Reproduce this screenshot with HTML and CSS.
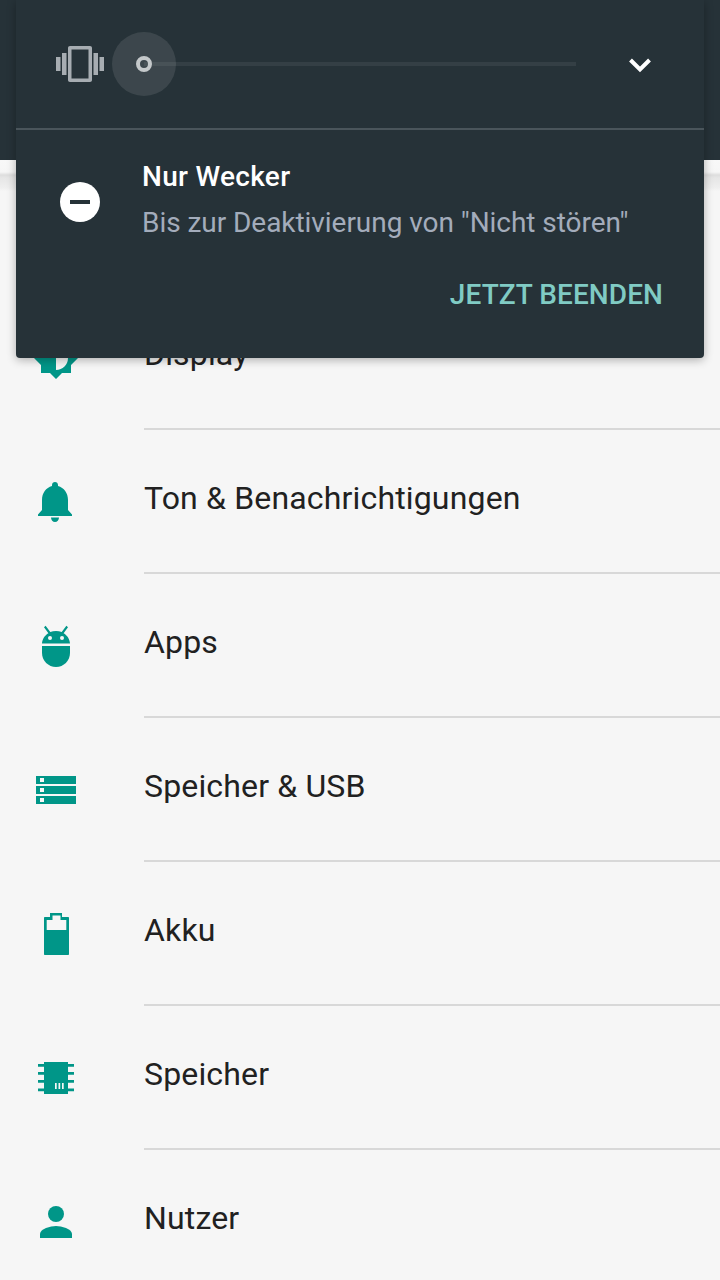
FILE: index.html
```html
<!DOCTYPE html>
<html lang="de">
<head>
    <meta charset="UTF-8">
    <meta name="viewport" content="width=device-width, initial-scale=1.0">
    <title>Einstellungen</title>
    <link rel="stylesheet" href="styles.css">
</head>
<body>
    <div class="screen">
        <div class="app-bar"></div>
        <div class="list-top"></div>

        <div class="settings-list">
            <div class="row">
                <div class="row-icon">
                    <svg width="48" height="48" viewBox="0 0 48 48"><path fill="#009688" d="M24 45l-6-6H9v-8l-7-7 7-7V9h8l7-7 7 7h8v8l7 7-7 7v8h-9z"/><path fill="#f6f6f6" d="M24 36c6.600 0 12-5.400 12-12S30.600 12 24 12z"/></svg>
                </div>
                <div class="row-label">Display</div>
            </div>
            <div class="row">
                <div class="row-icon">
                    <svg width="48" height="48" viewBox="0 0 48 48"><path fill="#009688" d="M23 4c-1.700 0-3 1.300-3 3v1c-6 1.600-10 7-10 14v10l-4 4.500V38h34v-1.500L36 32V22c0-7-4-12.400-10-14V7c0-1.700-1.300-3-3-3zM19 39.500h8c0 2.500-1.800 4.500-4 4.500s-4-2-4-4.500z"/></svg>
                </div>
                <div class="row-label">Ton &amp; Benachrichtigungen</div>
            </div>
            <div class="row">
                <div class="row-icon">
                    <svg width="48" height="48" viewBox="0 0 48 48"><path fill="#009688" d="M10 24h28v7c0 7.700-6.300 14-14 14s-14-6.300-14-14z"/><path fill="#009688" d="M10 21.500c.2-4.400 2.800-8.200 6.400-10.300L12 5.200l1.600-1.400 4.700 6.200c1.700-.7 3.600-1.100 5.700-1.100s4 .4 5.700 1.100l4.700-6.200L36 5.200l-4.400 6c3.600 2.100 6.200 5.900 6.400 10.300z"/><circle cx="18" cy="16" r="2" fill="#f6f6f6"/><circle cx="30" cy="16" r="2" fill="#f6f6f6"/></svg>
                </div>
                <div class="row-label">Apps</div>
            </div>
            <div class="row">
                <div class="row-icon">
                    <svg width="48" height="48" viewBox="0 0 48 48"><path fill="#009688" d="M4 10h40v8H4zM4 20h40v8H4zM4 30h40v8H4z"/><path fill="#f6f6f6" d="M8 12h4v4H8zM8 22h4v4H8zM8 32h4v4H8z"/></svg>
                </div>
                <div class="row-label">Speicher &amp; USB</div>
            </div>
            <div class="row">
                <div class="row-icon">
                    <svg width="48" height="48" viewBox="0 0 48 48"><path fill="#009688" fill-rule="evenodd" d="M18 3h12v4h6c.6 0 1 .4 1 1v36c0 .6-.4 1-1 1H13c-.6 0-1-.4-1-1V8c0-.6.4-1 1-1h5zM20.500 5.500V10h-5.800v10h19.600V10h-5.800V5.500z"/></svg>
                </div>
                <div class="row-label">Akku</div>
            </div>
            <div class="row">
                <div class="row-icon">
                    <svg width="48" height="48" viewBox="0 0 48 48"><path fill="#009688" d="M12 8h24v32H12zM6 10h6v2.700H6zM6 18h6v2.700H6zM6 26h6v2.700H6zM6 34.500h6v2.700H6zM36 10h6v2.700h-6zM36 18h6v2.700h-6zM36 26h6v2.700h-6zM36 34.500h6v2.700h-6z"/><path fill="#f6f6f6" d="M23 29h1.700v6H23zM26.500 29h1.700v6h-1.700zM30 29h1.700v6H30z"/></svg>
                </div>
                <div class="row-label">Speicher</div>
            </div>
            <div class="row">
                <div class="row-icon">
                    <svg width="48" height="48" viewBox="0 0 48 48"><circle cx="24" cy="16" r="8" fill="#009688"/><path fill="#009688" d="M8 40v-4c0-5.300 10.700-8 16-8s16 2.700 16 8v4z"/></svg>
                </div>
                <div class="row-label">Nutzer</div>
            </div>
        </div>

        <!-- volume panel sits over the settings list -->
        <div class="volume-panel">
            <div class="slider-row">
                <svg class="vibrate-icon" width="48" height="48" viewBox="0 0 48 48"><path fill="#a7adb2" fill-rule="evenodd" d="M0 17h4.500v14H0zM6 13h4.500v22H6zM37.500 13H42v22h-4.500zM43.500 17H48v14h-4.500zM14 6h20c1.200 0 2 .8 2 2v32c0 1.200-.8 2-2 2H14c-1.200 0-2-.8-2-2V8c0-1.200.8-2 2-2zm1.500 3.500v29h17v-29z"/></svg>
                <div class="slider">
                    <div class="slider-track"></div>
                    <div class="slider-halo"><div class="slider-thumb"></div></div>
                </div>
                <svg class="chevron" width="48" height="48" viewBox="0 0 48 48"><path fill="none" stroke="#fff" stroke-width="4" d="M14.500 20l9.500 9.500 9.500-9.500"/></svg>
            </div>
            <div class="dnd-info">
                <div class="dnd-icon"><div class="dnd-bar"></div></div>
                <div class="dnd-text">
                    <div class="dnd-title">Nur Wecker</div>
                    <div class="dnd-sub">Bis zur Deaktivierung von "Nicht stören"</div>
                </div>
            </div>
            <div class="dnd-action">JETZT BEENDEN</div>
        </div>
    </div>
</body>
</html>
```

FILE: styles.css
```css
* {
    box-sizing: border-box;
}

html, body {
    margin: 0;
    padding: 0;
}

body {
    font-family: Roboto, "Liberation Sans", sans-serif;
    background-color: #f6f6f6;
}

.screen {
    position: relative;
    width: 720px;
    height: 1280px;
    overflow: hidden;
    background-color: #f6f6f6;
}

.app-bar {
    height: 160px;
    background-color: #263238;
}

.list-top {
    height: 126px;
    background: linear-gradient(#f8f8f8 0, #f6f6f6 12px, #dedede 15px, #e6e6e6 18px, #efefef 28px, #f6f6f6 31px, #f6f6f6 100%);
}

.row {
    display: flex;
    align-items: center;
    height: 144px;
}

.row-icon {
    width: 144px;
    padding-left: 32px;
    display: flex;
    flex-shrink: 0;
}

.row-label {
    flex: 1;
    height: 144px;
    line-height: 136px;
    font-size: 32px;
    letter-spacing: 0.16px;
    color: #212121;
    border-bottom: 2px solid #d8d8d8;
}

.volume-panel {
    position: absolute;
    top: 0;
    left: 16px;
    width: 688px;
    height: 358px;
    background-color: #263238;
    border-radius: 0 0 4px 4px;
    box-shadow: 0 2px 10px rgba(0, 0, 0, 0.3);
}

.slider-row {
    height: 130px;
    display: flex;
    align-items: center;
    padding-left: 40px;
    border-bottom: 2px solid #4a555b;
}

.vibrate-icon {
    flex-shrink: 0;
}

.slider {
    position: relative;
    width: 464px;
    height: 64px;
    margin-left: 8px;
}

.slider-track {
    position: absolute;
    top: 30px;
    left: 32px;
    right: 0;
    height: 4px;
    background-color: #343f45;
}

.slider-halo {
    position: absolute;
    top: 0;
    left: 0;
    width: 64px;
    height: 64px;
    border-radius: 50%;
    background-color: rgba(255, 255, 255, 0.1);
    display: flex;
    align-items: center;
    justify-content: center;
}

.slider-thumb {
    width: 16px;
    height: 16px;
    border-radius: 50%;
    border: 4px solid #c4c8ca;
}

.chevron {
    margin-left: 40px;
}

.dnd-info {
    display: flex;
    padding-top: 28px;
}

.dnd-icon {
    width: 40px;
    height: 40px;
    margin: 24px 42px 0 44px;
    border-radius: 50%;
    background-color: #fff;
    display: flex;
    align-items: center;
    justify-content: center;
}

.dnd-bar {
    width: 20px;
    height: 4px;
    background-color: #263238;
}

.dnd-title {
    font-size: 28px;
    font-weight: 500;
    line-height: 36px;
    letter-spacing: 0.3px;
    margin-top: 1px;
    color: #fff;
}

.dnd-sub {
    font-size: 28px;
    line-height: 36px;
    letter-spacing: -0.05px;
    margin-top: 10px;
    color: #a3acbb;
}

.dnd-action {
    margin-top: 36px;
    padding-right: 41px;
    text-align: right;
    font-size: 28px;
    font-weight: 500;
    line-height: 36px;
    letter-spacing: 0.08px;
    color: #80cbc4;
}
```
